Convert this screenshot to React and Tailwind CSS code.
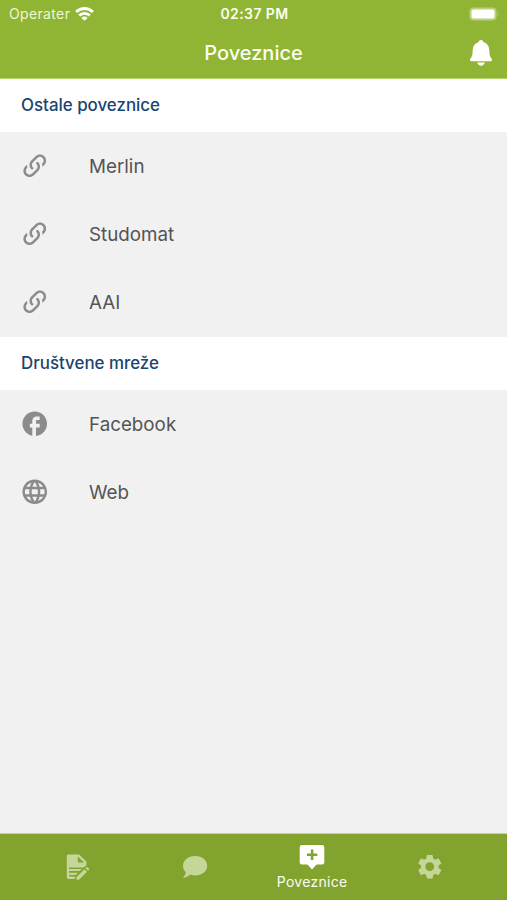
import { MdFacebook, MdLanguage, MdSettings } from 'react-icons/md'

function LinkIcon({ className }) {
    return (
        <svg viewBox="0 0 24 24" fill="currentColor" className={className}>
            <path d="M10.59,13.41C11,13.8 11,14.44 10.59,14.83C10.2,15.22 9.56,15.22 9.17,14.83C7.22,12.88 7.22,9.71 9.17,7.76V7.76L12.71,4.22C14.66,2.27 17.83,2.27 19.78,4.22C21.73,6.17 21.73,9.34 19.78,11.29L18.29,12.78C18.3,11.96 18.17,11.14 17.89,10.36L18.36,9.88C19.54,8.71 19.54,6.81 18.36,5.64C17.19,4.46 15.29,4.46 14.12,5.64L10.59,9.17C9.41,10.34 9.41,12.24 10.59,13.41M13.41,9.17C13.8,8.78 14.44,8.78 14.83,9.17C16.78,11.12 16.78,14.29 14.83,16.24V16.24L11.29,19.78C9.34,21.73 6.17,21.73 4.22,19.78C2.27,17.83 2.27,14.66 4.22,12.71L5.71,11.22C5.7,12.04 5.83,12.86 6.11,13.65L5.64,14.12C4.46,15.29 4.46,17.19 5.64,18.36C6.81,19.54 8.71,19.54 9.88,18.36L13.41,14.83C14.59,13.66 14.59,11.76 13.41,10.59C13,10.2 13,9.56 13.41,9.17Z" />
        </svg>
    )
}

function WifiIcon() {
    return (
        <svg viewBox="0 0 19 14" className="w-[19px] h-[14px]" fill="none" stroke="white" strokeWidth="2.9">
            <path d="M1.1 5a12 12 0 0 1 16.8 0" />
            <path d="M4.2 8.5a7.6 7.6 0 0 1 10.6 0" />
            <path d="M9.5 13.8L6.4 10.9a4.4 4.4 0 0 1 6.2 0z" fill="white" stroke="none" />
        </svg>
    )
}

function BellIcon() {
    return (
        <svg viewBox="0 0 24 28" className="w-6 h-7" fill="currentColor">
            <path d="M12 1C13.3 1 14.2 1.8 14.4 2.9C18.2 4 20.2 7 20.3 11C20.4 15.4 20.8 17.6 22.5 19.4C23.5 20.5 23.2 22.2 21.5 22.2H2.5C0.8 22.2 0.5 20.5 1.5 19.4C3.2 17.6 3.6 15.4 3.7 11C3.8 7 5.8 4 9.6 2.9C9.8 1.8 10.7 1 12 1Z" />
            <path d="M8.2 23.6H15.8C15.3 25.6 13.9 26.7 12 26.7S8.7 25.6 8.2 23.6Z" />
        </svg>
    )
}

function NoteIcon() {
    return (
        <svg viewBox="0 0 24 26" className="w-6 h-[26px]" fill="currentColor">
            <path fillRule="evenodd" d="M2.2 0.6H13L20.4 7.6V11.6L17.6 13.4H3V15H15.8L13.8 17H3V18.8H12L9.8 21H3V22.6H8.8V25H2.2Q0.8 25 0.8 23.6V2Q0.8 0.6 2.2 0.6ZM11.8 2.6V8.6H18Z" />
            <path d="M10.4 23.2L18.4 15.2L21 17.8L13 25.8H10.4ZM19.4 14.2L20.5 13.2Q21 12.8 21.5 13.2L23.1 14.8Q23.5 15.3 23.1 15.8L22 16.8Z" />
        </svg>
    )
}

function ChatIcon() {
    return (
        <svg viewBox="0 0 26 24" className="w-[26px] h-6" fill="currentColor">
            <path d="M13.2 1C20 1 25.2 5.2 25.2 10.8S20 20.4 13.2 20.4C11.4 20.4 9.8 20.2 8.4 19.6C6.4 21.6 3.8 22.8 0.8 22.9C2.4 21.4 3.6 19.4 3.8 17.2C2 15.4 1 13.2 1 10.8C1 5.2 6.4 1 13.2 1Z" />
        </svg>
    )
}

function AddLinkIcon() {
    return (
        <svg viewBox="0 0 26 26" className="w-[26px] h-[26px]" fill="currentColor">
            <path fillRule="evenodd" d="M3 1H23Q25.3 1 25.3 3.3V18.3Q25.3 20.6 23 20.6H17.5L13 25.4L8.5 20.6H3Q0.7 20.6 0.7 18.3V3.3Q0.7 1 3 1ZM11.8 5.6V9.5H7.9V12.1H11.8V16H14.4V12.1H18.3V9.5H14.4V5.6Z" />
        </svg>
    )
}

const sections = [
    {
        title: 'Ostale poveznice',
        items: [
            { label: 'Merlin', icon: LinkIcon },
            { label: 'Studomat', icon: LinkIcon },
            { label: 'AAI', icon: LinkIcon },
        ],
    },
    {
        title: 'Društvene mreže',
        items: [
            { label: 'Facebook', icon: MdFacebook },
            { label: 'Web', icon: MdLanguage },
        ],
    },
]

export default function App() {
    return (
        <div className="w-full h-screen flex flex-col overflow-hidden bg-[#f1f1f1] font-['Inter','Liberation_Sans',sans-serif]">
            {/* Status bar and title */}
            <header className="h-[79px] shrink-0 bg-[#90b534] border-b border-[#b5d36c] text-white">
                <div className="h-[27px] grid grid-cols-3 items-center pl-[9px] pr-[7px] text-sm leading-none">
                    <div className="flex items-center gap-[5px]">
                        <span className="text-[#eef6d8] tracking-[0.35px]">Operater</span>
                        <WifiIcon />
                    </div>
                    <span className="pt-px text-center text-sm leading-none font-semibold tracking-[0.4px] whitespace-nowrap text-[#fafdf0]">02:37 PM</span>
                    <svg viewBox="0 0 31 14" className="w-[31px] h-[14px] justify-self-end">
                        <rect x="0.5" y="0.5" width="27" height="13" rx="4" fill="#b9d17c" />
                        <rect x="2.5" y="2.6" width="23" height="8.8" rx="2" fill="white" />
                        <path d="M28.7 4.8Q30.6 7 28.7 9.2Z" fill="#b9d17c" />
                    </svg>
                </div>
                <div className="h-[51px] grid grid-cols-3 items-center">
                    <h1 className="col-start-2 pt-px text-center text-[20px] font-medium text-[#fafdf0]">Poveznice</h1>
                    <div className="flex justify-end pr-[14px]"><BellIcon /></div>
                </div>
            </header>

            {/* Link lists */}
            <main className="flex-1">
                {sections.map((s) => (
                    <section key={s.title}>
                        <h2 className="h-[53px] flex items-center px-[21px] bg-white text-[16.9px] font-medium text-[#1c4470]">{s.title}</h2>
                        <ul>
                            {s.items.map((item) => (
                                <li key={item.label} className="h-[68.4px] flex items-center pl-5">
                                    <item.icon className="w-[29.5px] h-[29.5px] mb-[1.5px] text-[#8b8b8b]" />
                                    <span className="ml-[39.5px] pt-px text-[18.8px] text-[#545454]">{item.label}</span>
                                </li>
                            ))}
                        </ul>
                    </section>
                ))}
            </main>

            {/* Tab bar */}
            <nav className="h-[67px] shrink-0 grid grid-cols-4 px-[19px] items-center bg-[#83a32f] border-t border-[#c5d3a0] text-[#c4d799]">
                <div className="flex justify-center"><NoteIcon /></div>
                <div className="flex justify-center"><ChatIcon /></div>
                <div className="flex flex-col items-center gap-[2px] pt-[2px] text-white">
                    <AddLinkIcon />
                    <span className="text-sm leading-5 tracking-[0.3px] text-[#fafdf0]">Poveznice</span>
                </div>
                <div className="flex justify-center"><MdSettings className="w-[29.5px] h-[29.5px]" /></div>
            </nav>
        </div>
    )
}
